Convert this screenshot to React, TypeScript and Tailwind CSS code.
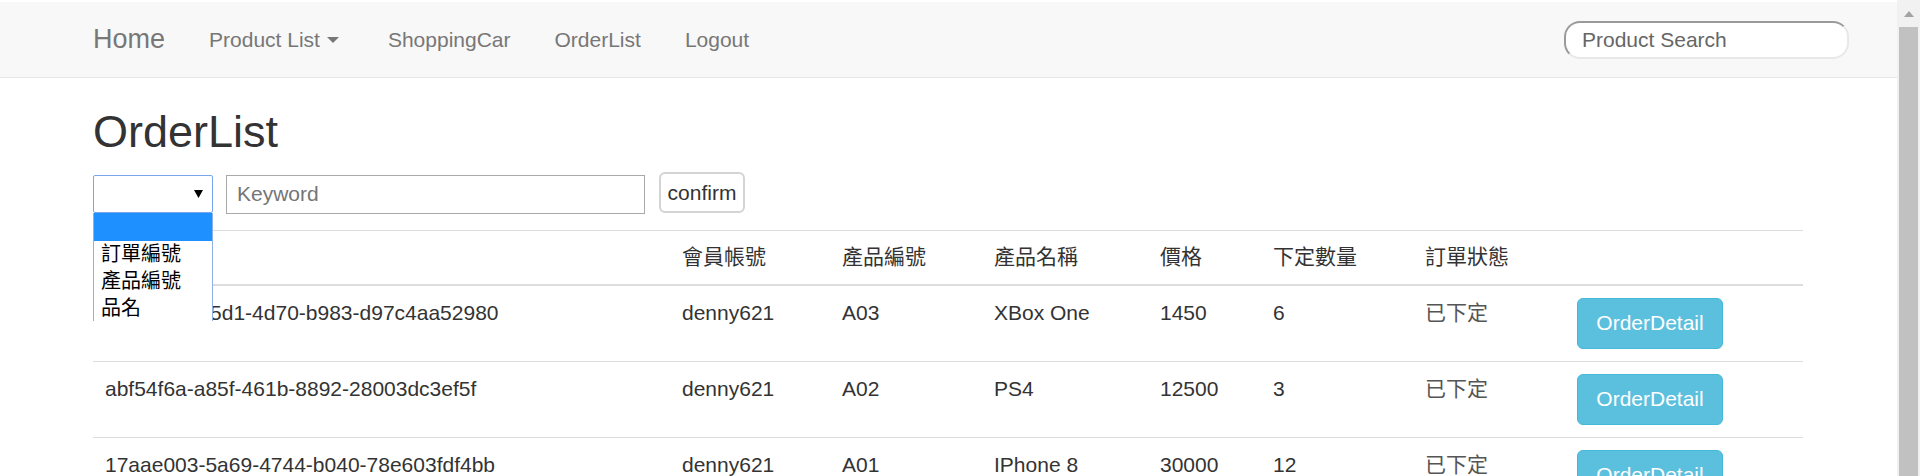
import React from 'react';

type Order = {
  id: string;
  account: string;
  productNo: string;
  productName: string;
  price: string;
  qty: string;
  status: string;
};

const orders: Order[] = [
  { id: '8c0f3a6e-e5d1-4d70-b983-d97c4aa52980', account: 'denny621', productNo: 'A03', productName: 'XBox One', price: '1450', qty: '6', status: '已下定' },
  { id: 'abf54f6a-a85f-461b-8892-28003dc3ef5f', account: 'denny621', productNo: 'A02', productName: 'PS4', price: '12500', qty: '3', status: '已下定' },
  { id: '17aae003-5a69-4744-b040-78e603fdf4bb', account: 'denny621', productNo: 'A01', productName: 'IPhone 8', price: '30000', qty: '12', status: '已下定' },
];

const headers = ['', '會員帳號', '產品編號', '產品名稱', '價格', '下定數量', '訂單狀態', ''];

const cols = 'grid grid-cols-[577px_160px_152px_166px_113px_152px_152px_238px]';

const Navbar: React.FC = () => (
  <div className="pt-[2px] bg-white">
    <nav className="h-[76px] bg-[#f8f8f8] border-b border-[#e7e7e7] flex items-center text-[#777]">
      <a className="ml-[93px] text-[27px] leading-none">Home</a>
      <ul className="flex items-center ml-[22px] text-[21px]">
        <li className="pl-[22px] pr-[27px] flex items-center">
          Product List
          <span className="ml-[7px] inline-block w-0 h-0 border-x-[6px] border-x-transparent border-t-[6px] border-t-[#777]" />
        </li>
        <li className="px-[22px]">ShoppingCar</li>
        <li className="px-[22px]">OrderList</li>
        <li className="px-[22px]">Logout</li>
      </ul>
      <div className="ml-auto mr-[48px] w-[285px] h-[38px] rounded-[16px] bg-white border-[2px] border-t-[#9a9a9a] border-l-[#9a9a9a] border-r-[#e8e8e8] border-b-[#e8e8e8] flex items-center pl-[16px] text-[21px] text-[#666]">
        Product Search
      </div>
    </nav>
  </div>
);

const SelectPopup: React.FC = () => (
  <div className="absolute left-[93px] top-[213px] w-[120px] h-[108px] bg-white border-x border-[#8fb0e6] overflow-hidden text-[20px] leading-[27px] text-black">
    <div className="h-[28px] bg-[#1e90ff]" />
    <div className="pl-[7px]">訂單編號</div>
    <div className="pl-[7px]">產品編號</div>
    <div className="pl-[7px]">品名</div>
  </div>
);

const SearchForm: React.FC = () => (
  <div className="flex items-start mt-[15px]">
    <div className="mt-[3px] w-[120px] h-[38px] border border-[#7aa6ee] rounded-[2px] bg-white flex items-center justify-end pr-[9px]">
      <svg width="9" height="8" viewBox="0 0 9 8">
        <polygon points="0,0 9,0 4.5,8" fill="#000" />
      </svg>
    </div>
    <div className="mt-[3px] ml-[13px] w-[419px] h-[39px] border border-[#a9a9a9] bg-white flex items-center pl-[10px] text-[21px] text-[#757575]">
      Keyword
    </div>
    <button className="ml-[14px] w-[86px] h-[41px] border-2 border-[#d4d4d4] rounded-[6px] bg-white text-[21px] text-[#333] leading-none">
      confirm
    </button>
  </div>
);

const OrderTable: React.FC = () => (
  <div className="mt-[16px] w-[1710px] border-t border-[#ddd]">
    <div className={`${cols} border-b-2 border-[#ddd] h-[55px]`}>
      {headers.map((h, i) => (
        <div key={i} className="px-[12px] pt-[11px] text-[21px] leading-[30px] text-[#333] font-normal">
          {h}
        </div>
      ))}
    </div>
    {orders.map((o) => (
      <div key={o.id} className={`${cols} h-[76px] border-b border-[#ddd] text-[21px] leading-[30px] text-[#333]`}>
        <div className="px-[12px] pt-[12px]">{o.id}</div>
        <div className="px-[12px] pt-[12px]">{o.account}</div>
        <div className="px-[12px] pt-[12px]">{o.productNo}</div>
        <div className="px-[12px] pt-[12px]">{o.productName}</div>
        <div className="px-[12px] pt-[12px]">{o.price}</div>
        <div className="px-[12px] pt-[12px]">{o.qty}</div>
        <div className="px-[12px] pt-[12px] text-[#555]">{o.status}</div>
        <div className="px-[12px] pt-[12px]">
          <button className="w-[146px] h-[51px] rounded-[6px] bg-[#5bc0de] border-[1.5px] border-[#46b8da] text-white text-[21px]">
            OrderDetail
          </button>
        </div>
      </div>
    ))}
  </div>
);

const App: React.FC = () => {
  return (
    <div className="w-[1920px] h-[476px] overflow-hidden flex bg-white font-['Liberation_Sans','Noto_Sans_CJK_TC',sans-serif]">
      <div className="relative w-[1897px] h-full">
        <Navbar />
        <main className="pl-[93px]">
          <h2 className="mt-[29px] text-[45px] leading-[1.1] text-[#333] font-normal">OrderList</h2>
          <SearchForm />
          <OrderTable />
        </main>
        <SelectPopup />
      </div>
      <div className="w-[23px] h-full bg-[#f1f1f1] flex flex-col items-center">
        <div className="h-[27px] flex items-center justify-center">
          <svg width="10" height="6" viewBox="0 0 10 6">
            <polygon points="0,6 10,6 5,0" fill="#a3a3a3" />
          </svg>
        </div>
        <div className="w-[19px] flex-1 bg-[#c1c1c1]" />
      </div>
    </div>
  );
};

export default App;
